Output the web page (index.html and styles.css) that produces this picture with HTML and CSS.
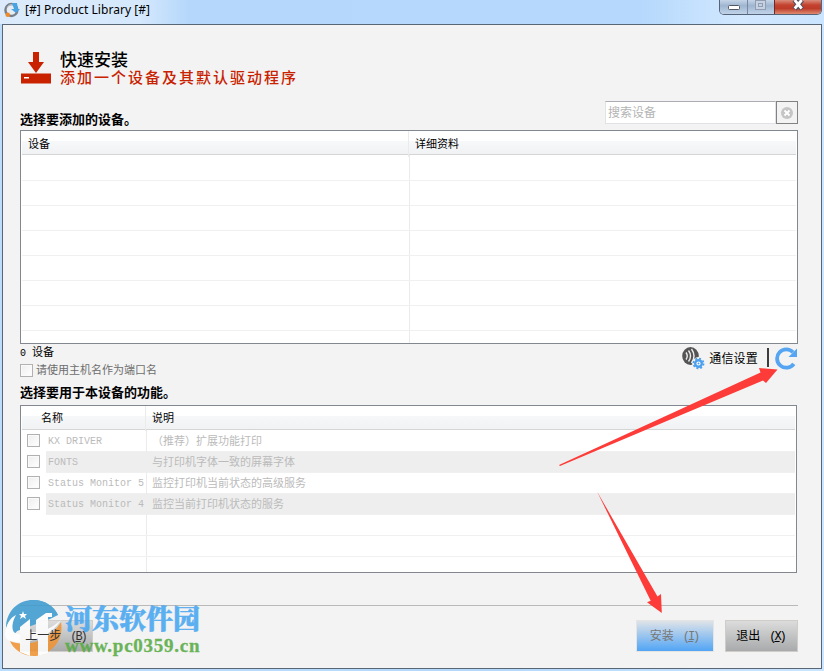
FILE: index.html
```
<!DOCTYPE html>
<html lang="zh-CN">
<head>
  <meta charset="UTF-8">
  <title>[#] Product Library [#]</title>
  <link rel="stylesheet" href="styles.css">
</head>
<body>

<div class="window">
  <header class="titlebar">
    <svg class="app-icon" width="16" height="16" viewBox="0 0 16 16">
      <circle cx="7.4" cy="8" r="6" fill="#e6ecf2" stroke="#777f89" stroke-width="2.4"/>
      <path d="M3 6a5 5 0 0 1 6-3" fill="none" stroke="#c2c8ce" stroke-width="1"/>
      <path d="M8 1h5l1 6h2l-4 4-5-4h3z" fill="#49a3e3"/>
      <circle cx="3.7" cy="12.8" r="2.3" fill="#ef8b2d"/>
    </svg>
    <span class="caption">[#] Product Library [#]</span>
    <div class="window-buttons">
      <span class="wbtn min"><svg width="27" height="14"><rect x="8.5" y="5.5" width="11" height="4" rx="1" fill="#fff" stroke="#535666"/></svg></span>
      <span class="wbtn max"><svg width="26" height="14"><rect x="7.5" y=".5" width="10" height="9" fill="#c4d2e3" stroke="#929eb0"/><rect x="10.5" y="3.5" width="4" height="3" fill="none" stroke="#929eb0"/></svg></span>
      <span class="wbtn close"><svg width="46" height="14"><path d="M19.500 0l7.500 9M27 0l-7.500 9" stroke="#4d4e60" stroke-width="5"/><path d="M19.700 0l7 8.500M26.700 0l-7 8.500" stroke="#fff" stroke-width="2.800"/></svg></span>
    </div>
  </header>

  <main class="client">
    <div class="heading">
      <svg width="30" height="32" viewBox="0 0 30 32">
        <path d="M12 0h6v10h5l-8 11-8-11h5z" fill="#c82200"/>
        <rect y="21.500" width="30" height="10" fill="#c82200"/>
        <rect x="3" y="25" width="5" height="1.500" fill="#fff"/>
      </svg>
      <div class="heading-text">
        <h1>快速安装</h1>
        <p>添加一个设备及其默认驱动程序</p>
      </div>
    </div>

    <div class="search-row">
      <h2>选择要添加的设备。</h2>
      <div class="search">
        <div class="search-input">搜索设备</div>
        <div class="search-clear">
          <svg width="12" height="12"><circle cx="6" cy="6" r="6" fill="#c5c5c5"/><path d="M3.500 3.500l5 5M8.500 3.500l-5 5" stroke="#fff" stroke-width="1.800"/></svg>
        </div>
      </div>
    </div>

    <div class="grid devices">
      <div class="tr head"><span>设备</span><span>详细资料</span></div>
      <div class="tr"><span></span><span></span></div>
      <div class="tr"><span></span><span></span></div>
      <div class="tr"><span></span><span></span></div>
      <div class="tr"><span></span><span></span></div>
      <div class="tr"><span></span><span></span></div>
      <div class="tr"><span></span><span></span></div>
      <div class="tr"><span></span><span></span></div>
      <div class="tr last"><span></span><span></span></div>
    </div>

    <div class="status-row">
      <div class="status-left">
        <div class="count"><span class="mono">0 </span>设备</div>
        <div class="host"><i class="check"></i>请使用主机名作为端口名</div>
      </div>
      <div class="status-right">
        <svg class="comm-icon" width="23" height="23" viewBox="0 0 23 23">
          <ellipse cx="8.500" cy="9" rx="8.300" ry="9" fill="#555"/>
          <path d="M4 5.500q2.500 3.500 0 7M6.500 3.500q4 5.500 0 11M9.500 2q5 7 0 14" fill="none" stroke="#eee" stroke-width="1.400"/>
          <circle cx="16.500" cy="16.500" r="6.400" fill="#f3f3f3"/>
          <circle cx="16.500" cy="16.500" r="5" fill="none" stroke="#4d9fee" stroke-width="1.800" stroke-dasharray="1.960"/>
          <circle cx="16.500" cy="16.500" r="3.300" fill="#fff" stroke="#4d9fee" stroke-width="2.400"/>
          <circle cx="16.500" cy="16.500" r="1" fill="#4d9fee"/>
        </svg>
        <span class="comm">通信设置</span>
        <i class="divider"></i>
        <svg class="refresh" width="23" height="23" viewBox="0 0 23 23">
          <path d="M18 5.200A9.200 9.200 0 1 0 18.800 16.800" fill="none" stroke="#55a5f2" stroke-width="3.800"/>
          <path d="M22 1.500v8.500h-8.500l3-3z" fill="#55a5f2"/>
        </svg>
      </div>
    </div>

    <h2 class="features-title">选择要用于本设备的功能。</h2>

    <div class="grid features">
      <div class="tr head"><span></span><span>名称</span><span>说明</span></div>
      <div class="tr first"><span><i class="check"></i></span><span class="mono">KX DRIVER</span><span>（推荐）扩展功能打印</span></div>
      <div class="tr alt"><span><i class="check"></i></span><span class="mono">FONTS</span><span>与打印机字体一致的屏幕字体</span></div>
      <div class="tr"><span><i class="check"></i></span><span class="mono">Status Monitor 5</span><span>监控打印机当前状态的高级服务</span></div>
      <div class="tr alt"><span><i class="check"></i></span><span class="mono">Status Monitor 4</span><span>监控当前打印机状态的服务</span></div>
      <div class="tr"><span></span><span></span><span></span></div>
      <div class="tr"><span></span><span></span><span></span></div>
      <div class="tr last"><span></span><span></span><span></span></div>
    </div>

    <footer class="actions">
      <div class="btn back"><span class="label">上一步<span class="key">(<u>B</u>)</span></span></div>
      <div class="btn install">安装<span class="key">(<u>I</u>)</span></div>
      <div class="btn exit">退出<span class="key">(<u>X</u>)</span></div>
    </footer>
  </main>

  <svg class="arrows" width="824" height="671">
    <path d="M559 465L760.500 372.500L759 368L777.500 369.500L766 383L763 380.500L560 466z" fill="#fd3b38"/>
    <path d="M597 491.500L657.500 596.500L661 594L661.800 613L647 602.300L650.700 600.700z" fill="#fd3b38"/>
  </svg>

  <div class="watermark">
    <svg width="58" height="58" viewBox="0 0 58 58">
      <path d="M1 27C2 11 14 1 28 1C40 1 49 7 53 16C42 13 29 18 20 25C12 31 8 36 7 41C2 38 1 33 1 27z" fill="#3e9bd0"/>
      <path d="M8 14C14 5 22 1 30 1C41 2 49 8 53 16L45 20L12 32L9 29z" fill="#3e9bd0"/>
      <path d="M56 23C59 40 48 55 31 57C18 58 8 50 5 42C22 49 45 42 56 23z" fill="#f09536"/>
      <path d="M0 35C1 25 5 19 11 16C7 23 6 31 10 34C20 39 43 33 56 21C47 36 29 43 14 43C5 43 0 41 0 35z" fill="#fff"/>
      <path d="M15 28l10-8v37l-10-4zM31 21l10-7h6v4h-4v36l-10 3V39h-8v-6h6z" fill="#fff"/>
      <path d="M18 12l1 3h3l-2 2 1 3-3-2-3 2 1-3-2-2h3z" fill="#fff"/>
    </svg>
    <div class="mark-text">
      <div class="mark-name">河东软件园</div>
      <div class="mark-url">www.pc0359.cn</div>
    </div>
  </div>
</div>

</body>
</html>
```

FILE: styles.css
```
* {
  box-sizing: border-box;
}
body {
  margin: 0;
  font-family: "Liberation Sans", "Noto Sans CJK SC", sans-serif;
  font-size: 11px;
  line-height: 1;
  color: #000;
}
h1, h2, p {
  margin: 0;
}
svg {
  display: block;
  flex: none;
}
.window {
  position: relative;
  width: 824px;
  height: 671px;
  padding: 0 2px;
  overflow: hidden;
  background: linear-gradient(90deg, #bcdcfb, #b5d8fb 60%, #cce5ff);
  white-space: nowrap;
}

/* title bar */
.titlebar {
  display: flex;
  height: 24px;
  padding-left: 1px;
  margin: 0 -2px;
  background: linear-gradient(90deg, #dcebfb 0, #d5e8fc 140px, #b4d7fb 190px, #b5d8fc 640px, #d2e8ff 740px, #cbe4ff);
}
.app-icon {
  margin: 2px 0 0 3px;
}
.caption {
  margin-left: 5px;
  font: 12px/20px "Noto Sans", sans-serif;
  letter-spacing: 0.04px;
}
.window-buttons {
  display: flex;
  height: 15px;
  margin-left: auto;
  margin-right: 2px;
  border: 1px solid #56647a;
  border-top: 0;
  border-radius: 0 0 5px 5px;
  overflow: hidden;
}
.wbtn {
  background: linear-gradient(#c5d5e8, #9fb5d0 40%, #c0d3e9);
}
.max {
  border-left: 1px solid #7688a0;
  width: 27px;
}
.close {
  border-left: 1px solid #6b2b2b;
  width: 47px;
  background: linear-gradient(#d98d7d, #c44430 35%, #bd3b28 60%, #df8b72);
}

.client {
  height: 645px;
  padding: 26px 23px 0 17px;
  border: 1px solid #596675;
  background: #f3f3f3;
}
.heading {
  display: flex;
  height: 50px;
  padding: 1px 0 0 1px;
}
.heading-text {
  margin-left: 9px;
}
h1 {
  font-size: 17px;
  line-height: 17px;
  font-weight: 500;
}
.heading p {
  color: #c82200;
  font-size: 15px;
  line-height: 17px;
  font-weight: 500;
  letter-spacing: 2px;
}
h2 {
  font-size: 13px;
  line-height: 14px;
  font-weight: bold;
}

/* search */
.search-row {
  display: flex;
  justify-content: space-between;
  height: 29px;
}
.search-row h2 {
  margin-top: 12px;
}
.search {
  display: flex;
  height: 23px;
}
.search-input {
  width: 171px;
  padding-left: 2px;
  border: 1px solid #e0e2e8;
  border-top-color: #abadb3;
  background: #fff;
  color: #b4b4b4;
  font-size: 12px;
  line-height: 22px;
}
.search-clear {
  display: flex;
  align-items: center;
  justify-content: center;
  width: 22px;
  border: 1px solid #828282;
}

/* tables */
.grid {
  border: 1px solid #828790;
  padding: 0 1px 1px;
  background: #fff;
  overflow: hidden;
}
.tr {
  display: grid;
  height: 25px;
  border-bottom: 1px solid #f0f0f0;
}
.tr span {
  border-right: 1px solid #ebebeb;
}
.tr span:last-child {
  border-right: 0;
  padding-left: 6px;
}
.tr.head {
  height: 24px;
  border-bottom-color: #d5d5d5;
  background: linear-gradient(#fff 42%, #f7f8fa 42%, #f1f2f4);
  line-height: 26px;
}
.tr.last {
  border-bottom: 0;
}
.devices {
  height: 214px;
}
.devices .tr {
  grid-template-columns: 388px 1fr;
}
.devices .head {
  grid-template-columns: 387px 1fr;
}
.devices .head span:first-child {
  padding-left: 6px;
}
.devices .head + .tr {
  height: 26px;
}
.devices .last {
  height: 12px;
}

.status-row {
  display: flex;
  justify-content: space-between;
  height: 43px;
}
.count {
  padding-top: 3px;
  line-height: 11px;
}
.mono {
  font-family: "Liberation Mono", monospace;
  font-size: 10px;
  white-space: pre;
}
.host {
  display: flex;
  margin-top: 5px;
  color: #6d6d6d;
  line-height: 12px;
}
.check {
  display: block;
  width: 13px;
  height: 13px;
  border: 1px solid #b1b1b1;
  background: linear-gradient(135deg, #eee, #fff);
  box-shadow: inset 0 0 0 1px #fafafa;
}
.host .check {
  margin-right: 3px;
}
.status-right {
  display: flex;
}
.comm-icon {
  margin-top: 3px;
}
.comm {
  margin-left: 4px;
  font-size: 12px;
  letter-spacing: 0.2px;
  line-height: 30px;
}
.divider {
  width: 2px;
  height: 19px;
  margin: 4px 6px 0 9px;
  background: #3c3c3c;
}
.refresh {
  margin-top: 3px;
}
.features-title {
  height: 18px;
  line-height: 12px;
}

.features {
  width: 777px;
  height: 168px;
}
.features .tr {
  grid-template-columns: 24px 101px 1fr;
  height: 21px;
  color: #bbb;
  line-height: 20px;
}
.features .tr .mono {
  line-height: 22px;
}
.features .head {
  grid-template-columns: 19px 105px 1fr;
  height: 24px;
  color: #000;
  line-height: 25px;
}
.features .tr span:first-child {
  border-right: 0;
  background: #fff;
  padding: 3px 0 0 5px;
}
.features .head span:first-child {
  background: none;
}
.features .tr span:nth-child(2) {
  padding-left: 2px;
}
.features .head span:nth-child(2) {
  padding-left: 0;
}
.features .tr span:last-child {
  padding-left: 5px;
}
.features .head span:last-child {
  padding-left: 6px;
}
.features .first {
  height: 22px;
  line-height: 22px;
}
.features .first span:first-child {
  padding-top: 4px;
}
.features .first .mono {
  line-height: 24px;
}
.features .alt {
  background: #eee;
}
.features .alt span {
  border-color: #eee;
}
.features .last {
  height: 17px;
}

/* bottom buttons */
.actions {
  display: flex;
  margin-top: 32px;
  padding-top: 14px;
  border-top: 1px solid #b9b9b9;
}
.btn {
  height: 32px;
  border: 1px solid #d0cdc8;
  background: linear-gradient(#dcdcdc, #a8aaab);
  font-size: 12px;
  line-height: 31px;
  text-align: center;
}
.key {
  margin-left: 9px;
  margin-right: 2px;
  font-family: "Liberation Mono", monospace;
  font-size: 12px;
  letter-spacing: -2px;
}
.back {
  width: 73px;
  color: #333;
}
/* keeps the caption readable through the watermark */
.back .label {
  position: relative;
  z-index: 2;
}
.install {
  width: 78px;
  margin-left: auto;
  border-color: #e4e4e4;
  background: linear-gradient(#dfe3e8, #51a5f5);
  color: #777;
}
.exit {
  width: 73px;
  margin-left: 11px;
}

.arrows {
  position: absolute;
  left: 0;
  top: 0;
}

/* watermark over the bottom left corner */
.watermark {
  position: absolute;
  left: 5px;
  top: 599px;
  display: flex;
  opacity: 0.88;
}
.mark-text {
  margin: 5px 0 0 2px;
}
.mark-name {
  color: #46a6f0;
  font: 900 27px/28px "Noto Serif CJK SC", "Noto Sans CJK SC", sans-serif;
  -webkit-text-stroke: 0.5px #46a6f0;
}
.mark-url {
  margin-top: 4px;
  color: #57ab43;
  font: bold 19px/20px "Liberation Serif", serif;
  letter-spacing: 0.75px;
  -webkit-text-stroke: 0.3px #57ab43;
}
```
